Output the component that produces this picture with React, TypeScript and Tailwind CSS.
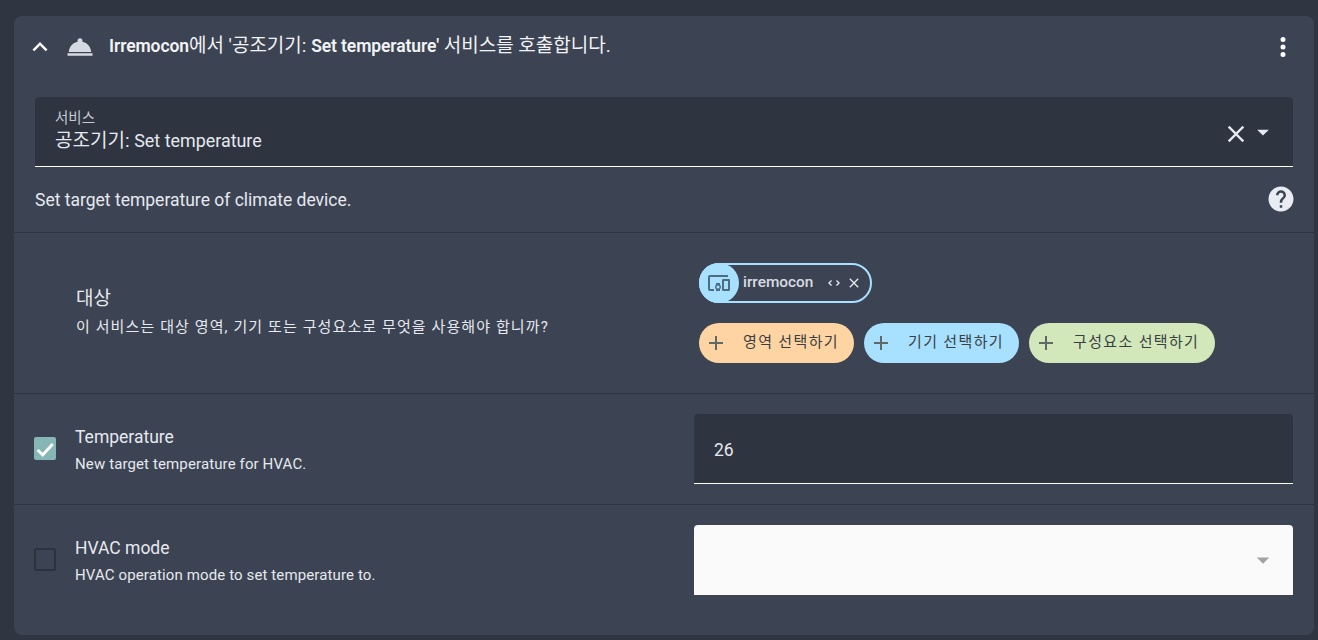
const P = {
  chevron: "M7.41,15.41L12,10.83L16.59,15.41L18,14L12,8L6,14L7.41,15.41Z",
  bell: "M2,17H22V19H2V17M13.84,7.79C13.94,7.55 14,7.28 14,7A2,2 0 0,0 12,5A2,2 0 0,0 10,7C10,7.28 10.06,7.55 10.16,7.79C6.25,8.6 3.27,11.93 3,16H21C20.73,11.93 17.75,8.6 13.84,7.79Z",
  dots: "M12,16A2,2 0 0,1 14,18A2,2 0 0,1 12,20A2,2 0 0,1 10,18A2,2 0 0,1 12,16M12,10A2,2 0 0,1 14,12A2,2 0 0,1 12,14A2,2 0 0,1 10,12A2,2 0 0,1 12,10M12,4A2,2 0 0,1 14,6A2,2 0 0,1 12,8A2,2 0 0,1 10,6A2,2 0 0,1 12,4Z",
  close: "M19,6.41L17.59,5L12,10.59L6.41,5L5,6.41L10.59,12L5,17.59L6.41,19L12,13.41L17.59,19L19,17.59L13.41,12L19,6.41Z",
  down: "M7,10L12,15L17,10H7Z",
  help: "M15.07,11.25L14.17,12.17C13.45,12.89 13,13.5 13,15H11V14.5C11,13.39 11.45,12.39 12.17,11.67L13.41,10.41C13.78,10.05 14,9.55 14,9C14,7.89 13.1,7 12,7A2,2 0 0,0 10,9H8A4,4 0 0,1 12,5A4,4 0 0,1 16,9C16,9.88 15.64,10.67 15.07,11.25M13,19H11V17H13M12,2A10,10 0 0,0 2,12C2,17.53 6.47,22 12,22C17.53,22 22,17.5 22,12C22,6.47 17.53,2 12,2Z",
  devices: "M3,6H21V4H3C1.89,4 1,4.89 1,6V18A2,2 0 0,0 3,20H7V18H3V6M13,12H9V13.78C8.39,14.33 8,15.11 8,16C8,16.89 8.39,17.67 9,18.22V20H13V18.22C13.61,17.67 14,16.88 14,16C14,15.12 13.61,14.33 13,13.78V12M11,17.5A1.5,1.5 0 0,1 9.5,16A1.5,1.5 0 0,1 11,14.5A1.5,1.5 0 0,1 12.5,16A1.5,1.5 0 0,1 11,17.5M22,8H16A1,1 0 0,0 15,9V19A1,1 0 0,0 16,20H22A1,1 0 0,0 23,19V9A1,1 0 0,0 22,8M21,18H17V10H21V18Z",
  unfold: "M18.17,12L15,8.83L16.41,7.41L21,12L16.41,16.58L15,15.17L18.17,12M5.83,12L9,15.17L7.59,16.59L3,12L7.59,7.42L9,8.83L5.83,12Z",
  plus: "M19,13H13V19H11V13H5V11H11V5H13V11H19V13Z",
};

function Icon({ d, size, className }: { d: string; size: number; className?: string }) {
  return (
    <svg viewBox="0 0 24 24" width={size} height={size} className={"shrink-0 " + (className ?? "")} fill="currentColor">
      <path d={d} />
    </svg>
  );
}

function PickButton({ label, color, width }: { label: string; color: string; width: string }) {
  return (
    <div className={`flex h-10 items-center rounded-[20px] pl-[5px] ${color} ${width}`}>
      <Icon d={P.plus} size={24} className="text-[#5f6a66]" />
      <span className="ml-[15px] -mt-[2px] text-[15px] tracking-[1.35px] text-[#3a3f44]">{label}</span>
    </div>
  );
}

function Check({ on }: { on?: boolean }) {
  return on ? (
    <div className="flex h-[23px] w-[22px] shrink-0 items-center justify-center rounded-[2px] bg-[#87b7b4]">
      <svg viewBox="0 0 24 24" width={22} height={22} fill="none" stroke="white" strokeWidth={3.2}>
        <path d="M4,13 L9.5,18.5 L20.5,6.5" />
      </svg>
    </div>
  ) : (
    <div className="h-[23px] w-[22px] shrink-0 rounded-[2px] border-2 border-[#2c323e]" />
  );
}

export default function App() {
  return (
    <div
      className="h-[640px] overflow-hidden bg-[#2f3541] pt-4 pl-[14px] pr-1 text-[#e6e9ef]"
      style={{ fontFamily: 'Roboto, "Noto Sans CJK KR", sans-serif' }}
    >
      <div className="h-[619px] w-[1300px] rounded-lg bg-[#3c4352]">
        <div className="flex h-[81px] items-start pt-4 pl-[11px] pr-4">
          <Icon d={P.chevron} size={30} className="text-white" />
          <Icon d={P.bell} size={30} className="ml-[10px] text-[#d5d9e1]" />
          <div className="ml-[14px] mt-[2px] flex-1 whitespace-nowrap text-[19px] leading-6 text-[#f1f3f6]">
            <b className="text-[17.5px] font-semibold tracking-[-0.1px]">Irremocon</b>에서 '공조기기: <b className="text-[17.5px] font-semibold tracking-[-0.1px]">Set temperature'</b> 서비스를 호출합니다.
          </div>
          <Icon d={P.dots} size={30} className="text-white" />
        </div>

        <div className="mx-[21px] flex h-[70px] items-start justify-between rounded-t bg-[#2e3440] border-b border-white pl-5 pr-[16px]">
          <div>
            <div className="mt-[15px] text-[14.5px] leading-[14px] text-[#c6cad2]">서비스</div>
            <div className="mt-[3px] text-[19px] leading-[24px]">공조기기: <span className="text-[17.9px]">Set temperature</span></div>
          </div>
          <div className="mt-[23px] flex items-center">
            <Icon d={P.close} size={28} className="text-[#e6e9ef]" />
            <Icon d={P.down} size={28} className="-mt-[4px] -ml-[1px] text-[#e6e9ef]" />
          </div>
        </div>

        <div className="flex h-[66px] items-center justify-between pl-[21px] pr-[18px] border-b border-[#2e3440]">
          <span className="pt-[2px] text-[17.5px]">Set target temperature of climate device.</span>
          <Icon d={P.help} size={30} className="-mt-[1px] text-[#e9ecf2]" />
        </div>

        <div className="flex h-[161px] border-b border-[#2e3440] pl-[62px] pr-[21px]">
          <div className="flex-1 pt-[54px]">
            <div className="text-[19px] leading-6">대상</div>
            <div className="mt-[6px] whitespace-nowrap text-[15px] leading-5 tracking-[1.1px]">이 서비스는 대상 영역, 기기 또는 구성요소로 무엇을 사용해야 합니까?</div>
          </div>
          <div className="w-[599px] pl-[5px] pt-[30px]">
            <div className="flex h-10 w-[173px] items-center rounded-[20px] border-2 border-[#a8e0ff]">
              <div className="-ml-[2px] -my-[2px] flex h-10 w-10 shrink-0 items-center justify-center rounded-full bg-[#a8e0ff]">
                <Icon d={P.devices} size={24} className="text-[#4f6b80]" />
              </div>
              <span className="ml-[4px] text-[15.4px] font-medium text-[#d8dce4]">irremocon</span>
              <Icon d={P.unfold} size={16} className="ml-[13px] text-[#e6e9ef]" />
              <Icon d={P.close} size={16} className="ml-[4px] text-[#e6e9ef]" />
            </div>
            <div className="mt-5 flex gap-[10px]">
              <PickButton label="영역 선택하기" color="bg-[#ffd4a3]" width="w-[155px]" />
              <PickButton label="기기 선택하기" color="bg-[#a8e0ff]" width="w-[155px]" />
              <PickButton label="구성요소 선택하기" color="bg-[#d3e8ba]" width="w-[186px]" />
            </div>
          </div>
        </div>

        <div className="flex h-[111px] items-start border-b border-[#2e3440] pl-5 pr-[21px] pt-5">
          <div className="mt-[23px]"><Check on /></div>
          <div className="ml-[19px] flex-1 pt-[11px]">
            <div className="text-[17.5px] leading-6">Temperature</div>
            <div className="mt-[5px] text-[15px] leading-5 tracking-[0.12px]">New target temperature for HVAC.</div>
          </div>
          <div className="flex h-[70px] w-[599px] items-center rounded-t bg-[#2e3440] border-b border-white pl-5 pt-[3px] text-[17.5px]">26</div>
        </div>

        <div className="flex items-start pl-5 pr-[21px] pt-5">
          <div className="mt-[23px]"><Check /></div>
          <div className="ml-[19px] flex-1 pt-[11px]">
            <div className="text-[17.5px] leading-6">HVAC mode</div>
            <div className="mt-[5px] text-[15px] leading-5 tracking-[0.12px]">HVAC operation mode to set temperature to.</div>
          </div>
          <div className="flex h-[70px] w-[599px] items-center justify-end rounded-t bg-[#fafafa] pr-[15px]">
            <Icon d={P.down} size={30} className="-mt-[1px] text-[#a3a3a3]" />
          </div>
        </div>
      </div>
    </div>
  );
}
